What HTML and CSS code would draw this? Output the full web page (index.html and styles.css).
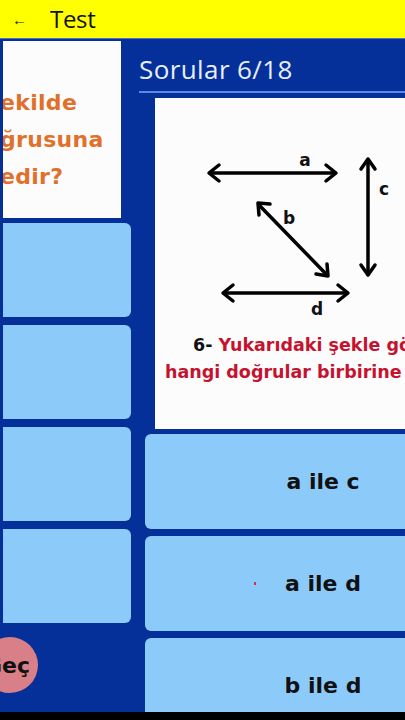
FILE: index.html
```html
<!DOCTYPE html>
<html lang="tr">
<head>
<meta charset="utf-8">
<title>Test</title>
<link rel="stylesheet" href="styles.css">
</head>
<body>
<div class="screen">
  <header class="appbar">
    <span class="back">←</span>
    <span class="title">Test</span>
  </header>
  <main class="content">
    <section class="prev-page">
      <div class="prev-card">
        <div class="prev-text">
          <p>ekilde</p>
          <p>ğrusuna</p>
          <p>edir?</p>
        </div>
      </div>
      <div class="prev-option"></div>
      <div class="prev-option"></div>
      <div class="prev-option"></div>
      <div class="prev-option"></div>
      <div class="skip"><span>Geç</span></div>
    </section>
    <section class="page">
      <h1 class="counter">Sorular 6/18</h1>
      <div class="question">
        <svg class="figure" width="340" height="331" viewBox="0 0 340 331">
          <g stroke="#000" stroke-width="3.5" fill="none" stroke-linecap="round" stroke-linejoin="round">
            <line x1="55" y1="75" x2="180" y2="75"/>
            <path d="M64 67 L54 75 L64 83"/>
            <path d="M171 67 L181 75 L171 83"/>
            <line x1="213" y1="62" x2="213" y2="176"/>
            <path d="M206 71 L213 61 L220 71"/>
            <path d="M206 167 L213 177 L220 167"/>
            <line x1="104" y1="107" x2="172" y2="177"/>
            <path d="M104 117 L103 105 L115 106"/>
            <path d="M161 176 L173 178 L172 166"/>
            <line x1="69" y1="195" x2="192" y2="195"/>
            <path d="M78 187 L68 195 L78 203"/>
            <path d="M183 187 L193 195 L183 203"/>
          </g>
          <g class="labels">
            <text x="150" y="68" text-anchor="middle">a</text>
            <text x="229" y="97" text-anchor="middle">c</text>
            <text x="134" y="126" text-anchor="middle">b</text>
            <text x="162" y="217" text-anchor="middle">d</text>
          </g>
          <text class="qtext" x="38" y="253"><tspan class="qnum">6- </tspan>Yukarıdaki şekle göre</text>
          <text class="qtext" x="10" y="280">hangi doğrular birbirine</text>
        </svg>
      </div>
      <div class="answers">
        <div class="answer">a ile c</div>
        <div class="answer"><span class="speck"></span>a ile d</div>
        <div class="answer">b ile d</div>
      </div>
    </section>
  </main>
  <footer class="navbar"></footer>
</div>
</body>
</html>
```
FILE: styles.css
```css
* { box-sizing: border-box; }
html, body { margin: 0; padding: 0; }
body {
  width: 405px;
  height: 720px;
  overflow: hidden;
  font-family: "Liberation Sans", "DejaVu Sans", sans-serif;
  background: #000;
}
.screen {
  width: 405px;
  height: 720px;
  display: flex;
  flex-direction: column;
}
.appbar {
  height: 39px;
  flex: none;
  background: #ffff00;
  display: flex;
  align-items: center;
  border-bottom: 1px solid #4f72c8;
}
.back {
  font-size: 15px;
  color: #111;
  margin-left: 12px;
  width: 38px;
  line-height: 1;
}
.title {
  font-family: "Open Sans", "Liberation Sans", sans-serif;
  font-size: 24px;
  color: #111;
  line-height: 1;
  letter-spacing: -0.3px;
}
.content {
  flex: 1;
  background: #05309a;
  display: flex;
  overflow: hidden;
  padding-left: 3px;
  position: relative;
}
.prev-page {
  width: 128px;
  flex: none;
  padding-top: 2px;
  display: flex;
  flex-direction: column;
  gap: 8px;
}
.prev-card {
  width: 118px;
  height: 177px;
  background: #fdfcfd;
  margin-bottom: -3px;
  overflow: hidden;
  padding-top: 43px;
}
.prev-text {
  margin-left: -3px;
}
.prev-text p {
  margin: 0;
  font-family: "DejaVu Sans", sans-serif;
  font-weight: bold;
  font-size: 22px;
  line-height: 37px;
  color: #e0702a;
  letter-spacing: 0.3px;
}
.prev-option {
  height: 94px;
  flex: none;
  background: #8ccbf9;
  border-radius: 0 6px 6px 0;
}
.skip {
  position: absolute;
  left: -18px;
  top: 598px;
  width: 56px;
  height: 56px;
  border-radius: 50%;
  background: #d97f88;
  display: flex;
  align-items: center;
  justify-content: center;
}
.skip span {
  font-family: "DejaVu Sans", sans-serif;
  font-weight: bold;
  font-size: 22px;
  color: #111;
  margin-left: -6px;
  white-space: nowrap;
}
.page {
  flex: none;
  width: 360px;
  margin-left: 8px;
  display: flex;
  flex-direction: column;
}
.counter {
  margin: 0;
  font-family: "Open Sans", "Liberation Sans", sans-serif;
  font-weight: normal;
  font-size: 26px;
  color: #e8eefb;
  line-height: 30px;
  padding-top: 15px;
  padding-bottom: 7px;
  border-bottom: 2px solid #5b88e6;
  letter-spacing: 0.4px;
}
.question {
  margin-top: 5px;
  margin-left: 16px;
  width: 340px;
  height: 331px;
  background: #fdfcfd;
  flex: none;
}
.figure { display: block; }
.labels text {
  font-family: "DejaVu Sans", sans-serif;
  font-weight: bold;
  font-size: 17px;
  fill: #111;
}
.qtext {
  font-family: "DejaVu Sans", sans-serif;
  font-weight: bold;
  font-size: 17.5px;
  fill: #c5132f;
}
.qtext .qnum { fill: #111; }
.answers {
  margin-top: 5px;
  margin-left: 6px;
  display: flex;
  flex-direction: column;
  gap: 7px;
}
.answer {
  width: 356px;
  height: 95px;
  flex: none;
  background: #8ccbf9;
  border-radius: 6px;
  display: flex;
  align-items: center;
  justify-content: center;
  font-family: "DejaVu Sans", sans-serif;
  font-weight: bold;
  font-size: 22px;
  color: #111;
  position: relative;
}
.speck {
  position: absolute;
  left: 109px;
  top: 46px;
  width: 2px;
  height: 3px;
  background: #d0344c;
}
.navbar {
  height: 8px;
  flex: none;
  background: #000;
}
```
